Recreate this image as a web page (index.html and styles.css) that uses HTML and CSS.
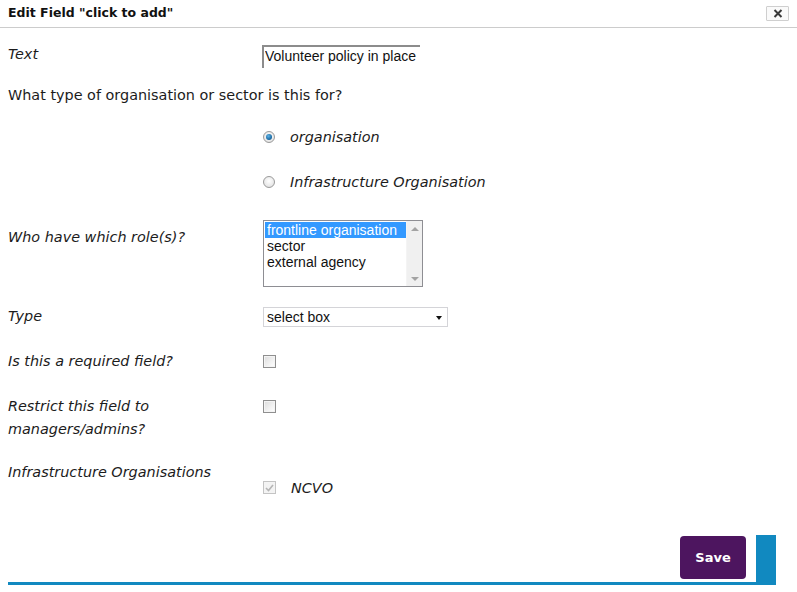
FILE: index.html
```html
<!DOCTYPE html>
<html>
<head>
<meta charset="utf-8">
<link rel="stylesheet" href="styles.css">
</head>
<body>
<div class="dialog">
  <div class="header">
    <h1 class="title">Edit Field "click to add"</h1>
    <button class="close" type="button" aria-label="close">
      <svg width="10" height="9" viewBox="0 0 10 9"><path d="M1.5 1 L8.5 8 M8.5 1 L1.5 8" stroke="#3a3a3a" stroke-width="2" fill="none"/></svg>
    </button>
  </div>

  <div class="form">
    <div class="row row-text">
      <label class="label">Text</label>
      <div class="control"><input class="textinput" type="text" value="Volunteer policy in place"></div>
    </div>

    <div class="question">What type of organisation or sector is this for?</div>

    <div class="row row-radios">
      <div class="label"></div>
      <div class="control">
        <div class="option opt1"><span class="radio checked"></span><span class="opt-text">organisation</span></div>
        <div class="option opt2"><span class="radio"></span><span class="opt-text">Infrastructure Organisation</span></div>
      </div>
    </div>

    <div class="row row-roles">
      <label class="label">Who have which role(s)?</label>
      <div class="control">
        <div class="listbox" role="listbox">
          <div class="items">
            <div class="item selected">frontline organisation</div>
            <div class="item">sector</div>
            <div class="item">external agency</div>
          </div>
          <div class="scrollbar">
            <span class="arrow-up"></span>
            <span class="arrow-down"></span>
          </div>
        </div>
      </div>
    </div>

    <div class="row row-type">
      <label class="label">Type</label>
      <div class="control">
        <div class="selectbox"><span class="sel-text">select box</span><span class="sel-arrow"></span></div>
      </div>
    </div>

    <div class="row row-required">
      <label class="label">Is this a required field?</label>
      <div class="control"><span class="checkbox"></span></div>
    </div>

    <div class="row row-restrict">
      <label class="label">Restrict this field to<br>managers/admins?</label>
      <div class="control"><span class="checkbox"></span></div>
    </div>

    <div class="row row-infra">
      <label class="label">Infrastructure Organisations</label>
      <div class="control">
        <div class="option"><span class="checkbox disabled">
          <svg width="9" height="8" viewBox="0 0 9 8"><path d="M1 4 L3.5 6.5 L8 1" stroke="#b5b5b5" stroke-width="1.6" fill="none"/></svg>
        </span><span class="opt-text">NCVO</span></div>
      </div>
    </div>
  </div>

  <div class="footer">
    <div class="footer-main">
      <button class="save" type="button">Save</button>
    </div>
    <div class="footer-bar"></div>
  </div>
</div>
</body>
</html>
```

FILE: styles.css
```css
html, body {
  margin: 0;
  padding: 0;
  background: #ffffff;
}

body {
  font-family: "DejaVu Sans", Verdana, sans-serif;
  font-size: 14.4px;
  color: #1c1c1c;
  width: 797px;
  height: 592px;
  overflow: hidden;
}

.header {
  height: 27px;
  border-bottom: 1px solid #cccccc;
  display: flex;
  align-items: flex-start;
  justify-content: space-between;
  padding: 0 8px;
}

.title {
  margin: 0;
  padding-top: 5px;
  font-size: 12.5px;
  font-weight: bold;
  line-height: 16px;
  color: #111111;
}

.close {
  margin-top: 6px;
  width: 23px;
  height: 15px;
  padding: 0;
  border: 1px solid #cfcfcf;
  background: #fafafa;
  display: flex;
  align-items: center;
  justify-content: center;
  border-radius: 1px;
}

.form {
  padding-left: 8px;
}

.row {
  display: grid;
  grid-template-columns: 254px 1fr;
  align-items: start;
}

.label {
  font-style: italic;
  line-height: 23px;
  display: block;
}

.row-text {
  margin-top: 15px;
}

.textinput {
  margin: 2px 0 0 0;
  width: 158px;
  height: 23px;
  box-sizing: border-box;
  border: none;
  border-top: 2px solid #8c8c8c;
  border-left: 2px solid #8c8c8c;
  padding: 0 0 3px 1px;
  font-family: "Liberation Sans", Arial, sans-serif;
  font-size: 14px;
  color: #111;
  background: #fff;
  outline: none;
}

.question {
  margin-top: 16px;
  line-height: 23px;
}

.row-radios {
  margin-top: 18px;
}

.row-radios .control {
  padding-left: 1px;
}

.option {
  display: flex;
  align-items: center;
  height: 23px;
}

.opt2 {
  margin-top: 22px;
}

.opt-text {
  font-style: italic;
  margin-left: 15px;
}

.radio {
  width: 12px;
  height: 12px;
  box-sizing: border-box;
  border-radius: 50%;
  border: 1px solid #9a9a9a;
  background: radial-gradient(circle at 50% 40%, #ffffff 0%, #e6e6e6 70%, #d2d2d2 100%);
  display: flex;
  align-items: center;
  justify-content: center;
}

.radio.checked::after {
  content: "";
  width: 6px;
  height: 6px;
  border-radius: 50%;
  background: radial-gradient(circle at 40% 35%, #5fb3e6 0%, #1f6fa8 60%, #0d4d7e 100%);
}

.row-roles {
  margin-top: 27px;
}

.row-roles .label {
  padding-top: 6px;
}

.row-roles .control {
  padding-left: 1px;
}

.listbox {
  width: 160px;
  height: 67px;
  box-sizing: border-box;
  border: 1px solid #8e8e93;
  display: flex;
  background: #fff;
  font-family: "Liberation Sans", Arial, sans-serif;
  font-size: 14px;
}

.items {
  flex: 1;
  padding: 1px 0 0 1px;
}

.item {
  line-height: 16px;
  height: 16px;
  padding-left: 2px;
  color: #111;
  white-space: nowrap;
}

.item.selected {
  background: #3399ff;
  color: #ffffff;
}

.scrollbar {
  width: 16px;
  background: #f0f0f0;
  border-left: 1px solid #f4f4f4;
  display: flex;
  flex-direction: column;
  justify-content: space-between;
  align-items: center;
  padding: 6px 0 5px 0;
  box-sizing: border-box;
}

.arrow-up {
  width: 0;
  height: 0;
  border-left: 4px solid transparent;
  border-right: 4px solid transparent;
  border-bottom: 4px solid #a3a3a3;
}

.arrow-down {
  width: 0;
  height: 0;
  border-left: 4px solid transparent;
  border-right: 4px solid transparent;
  border-top: 4px solid #a3a3a3;
}

.row-type {
  margin-top: 20px;
}

.row-type .label {
  line-height: 19px;
}

.row-type .control {
  padding-left: 1px;
}

.selectbox {
  width: 185px;
  height: 20px;
  box-sizing: border-box;
  border: 1px solid #d4d4d8;
  display: flex;
  align-items: center;
  justify-content: space-between;
  padding: 0 5px 0 3px;
  font-family: "Liberation Sans", Arial, sans-serif;
  font-size: 14px;
  color: #111;
  background: #fff;
}

.sel-arrow {
  width: 0;
  height: 0;
  border-left: 3.5px solid transparent;
  border-right: 3.5px solid transparent;
  border-top: 4px solid #111;
  margin-top: 1px;
}

.row-required {
  margin-top: 23px;
}

.row-required .control,
.row-restrict .control {
  padding-left: 1px;
  padding-top: 5px;
}

.checkbox {
  width: 13px;
  height: 13px;
  box-sizing: border-box;
  border: 1px solid #8f8f8f;
  background: linear-gradient(135deg, #dcdcdc 0%, #f2f2f2 60%, #ffffff 100%);
  display: flex;
  align-items: center;
  justify-content: center;
  box-shadow: inset 0 0 0 1px #f4f4f4;
}

.checkbox.disabled {
  border-color: #c4c4c4;
  background: #f3f3f3;
}

.row-restrict {
  margin-top: 22px;
}

.row-infra {
  margin-top: 20px;
}

.row-infra .control {
  padding-left: 1px;
  padding-top: 15px;
}

.footer {
  margin-top: 36px;
  padding-left: 8px;
  display: flex;
  align-items: flex-end;
}

.footer-main {
  width: 748px;
  border-bottom: 3px solid #1189c0;
  display: flex;
  justify-content: flex-end;
}

.save {
  margin: 0 10px 3px 0;
  width: 66px;
  height: 43px;
  border: none;
  border-radius: 4px;
  background: #4d155f;
  color: #ffffff;
  font-family: "DejaVu Sans", Verdana, sans-serif;
  font-weight: bold;
  font-size: 13px;
  padding: 0;
}

.footer-bar {
  width: 20px;
  height: 50px;
  background: #1189c0;
}
```
